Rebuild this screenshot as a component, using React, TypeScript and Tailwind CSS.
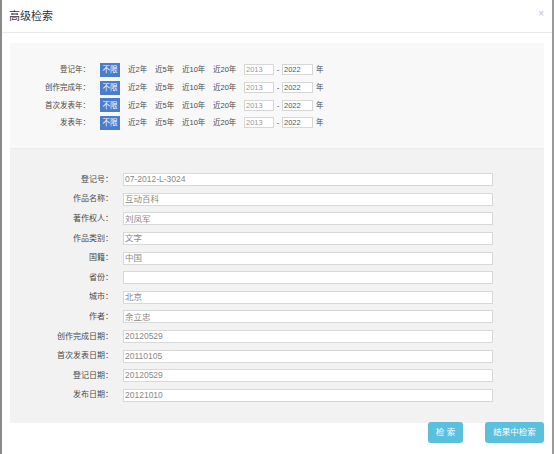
import React from 'react';

const FONT = { fontFamily: '"Liberation Sans", Arial, "Noto Sans CJK SC", sans-serif' };

const yearRows = ['登记年：', '创作完成年：', '首次发表年：', '发表年：'];
const ranges = [
  { label: '近2年', w: 'w-[27px]' },
  { label: '近5年', w: 'w-[27px]' },
  { label: '近10年', w: 'w-[31px]' },
  { label: '近20年', w: 'w-[31px]' },
];

const fields = [
  { label: '登记号：', value: '07-2012-L-3024' },
  { label: '作品名称：', value: '互动百科' },
  { label: '著作权人：', value: '刘凤军' },
  { label: '作品类别：', value: '文字' },
  { label: '国籍：', value: '中国' },
  { label: '省份：', value: '' },
  { label: '城市：', value: '北京' },
  { label: '作者：', value: '余立忠' },
  { label: '创作完成日期：', value: '20120529' },
  { label: '首次发表日期：', value: '20110105' },
  { label: '登记日期：', value: '20120529' },
  { label: '发布日期：', value: '20121010' },
];

const App: React.FC = () => {
  return (
    <div className="w-[554px] h-[454px] overflow-hidden bg-white" style={FONT}>
      <div className="h-[470px] bg-white border-l-2 border-r-2 border-l-[#8a8a8a] border-r-[#9a9a9a]">
        {/* Header */}
        <div className="h-[33px] flex items-center justify-between pl-[7px] pr-[8px] border-b border-[#e8e8e8]">
          <span className="text-[11px] text-[#333]">高级检索</span>
          <span className="text-[10px] text-[#c4c4c4] leading-none -mt-[4px]">×</span>
        </div>

        <div className="px-[8px] pt-[10px]">
          {/* Year filters */}
          <div className="h-[106px] bg-[#f8f8f8] pt-[18px] border-b border-[#ececec]">
            {yearRows.map((label) => (
              <div key={label} className="h-[17.7px] flex items-center text-[7.5px] text-[#4a4a4a]">
                <span className="w-[80px] text-right">{label}</span>
                <span className="ml-[10px] w-[20px] h-[14px] bg-[#4a7dcb] text-white flex items-center justify-center">
                  不限
                </span>
                <span className="w-[8px]" />
                {ranges.map((r) => (
                  <span key={r.label} className={r.w}>
                    {r.label}
                  </span>
                ))}
                <span className="w-[30px] h-[11px] bg-white border border-[#d6d6d6] text-[#999] flex items-center pl-[1px]">
                  2013
                </span>
                <span className="w-[8px] text-center">-</span>
                <span className="w-[31px] h-[11px] bg-white border border-[#d6d6d6] text-[#555] flex items-center pl-[1px]">
                  2022
                </span>
                <span className="ml-[3px]">年</span>
              </div>
            ))}
          </div>

          {/* Detail form */}
          <div className="h-[274px] bg-[#f2f2f2] pt-[21px]">
            {fields.map((f) => (
              <div key={f.label} className="h-[19.6px] flex items-center">
                <span className="w-[103px] text-right text-[8px] text-[#4a4a4a]">{f.label}</span>
                <span className="ml-[10px] w-[370px] h-[13px] bg-white border border-[#d8d8d8] text-[8.5px] text-[#888] flex items-center pl-[1px]">
                  {f.value}
                </span>
              </div>
            ))}
          </div>

          {/* Buttons */}
          <div className="flex justify-end gap-[22px] mt-[-1px]">
            <button className="w-[35px] h-[21px] rounded-[3px] bg-[#5bc0de] text-white text-[8.5px]">
              检 索
            </button>
            <button className="w-[59px] h-[21px] rounded-[3px] bg-[#5bc0de] text-white text-[8.5px]">
              结果中检索
            </button>
          </div>
        </div>
      </div>
    </div>
  );
};

export default App;
